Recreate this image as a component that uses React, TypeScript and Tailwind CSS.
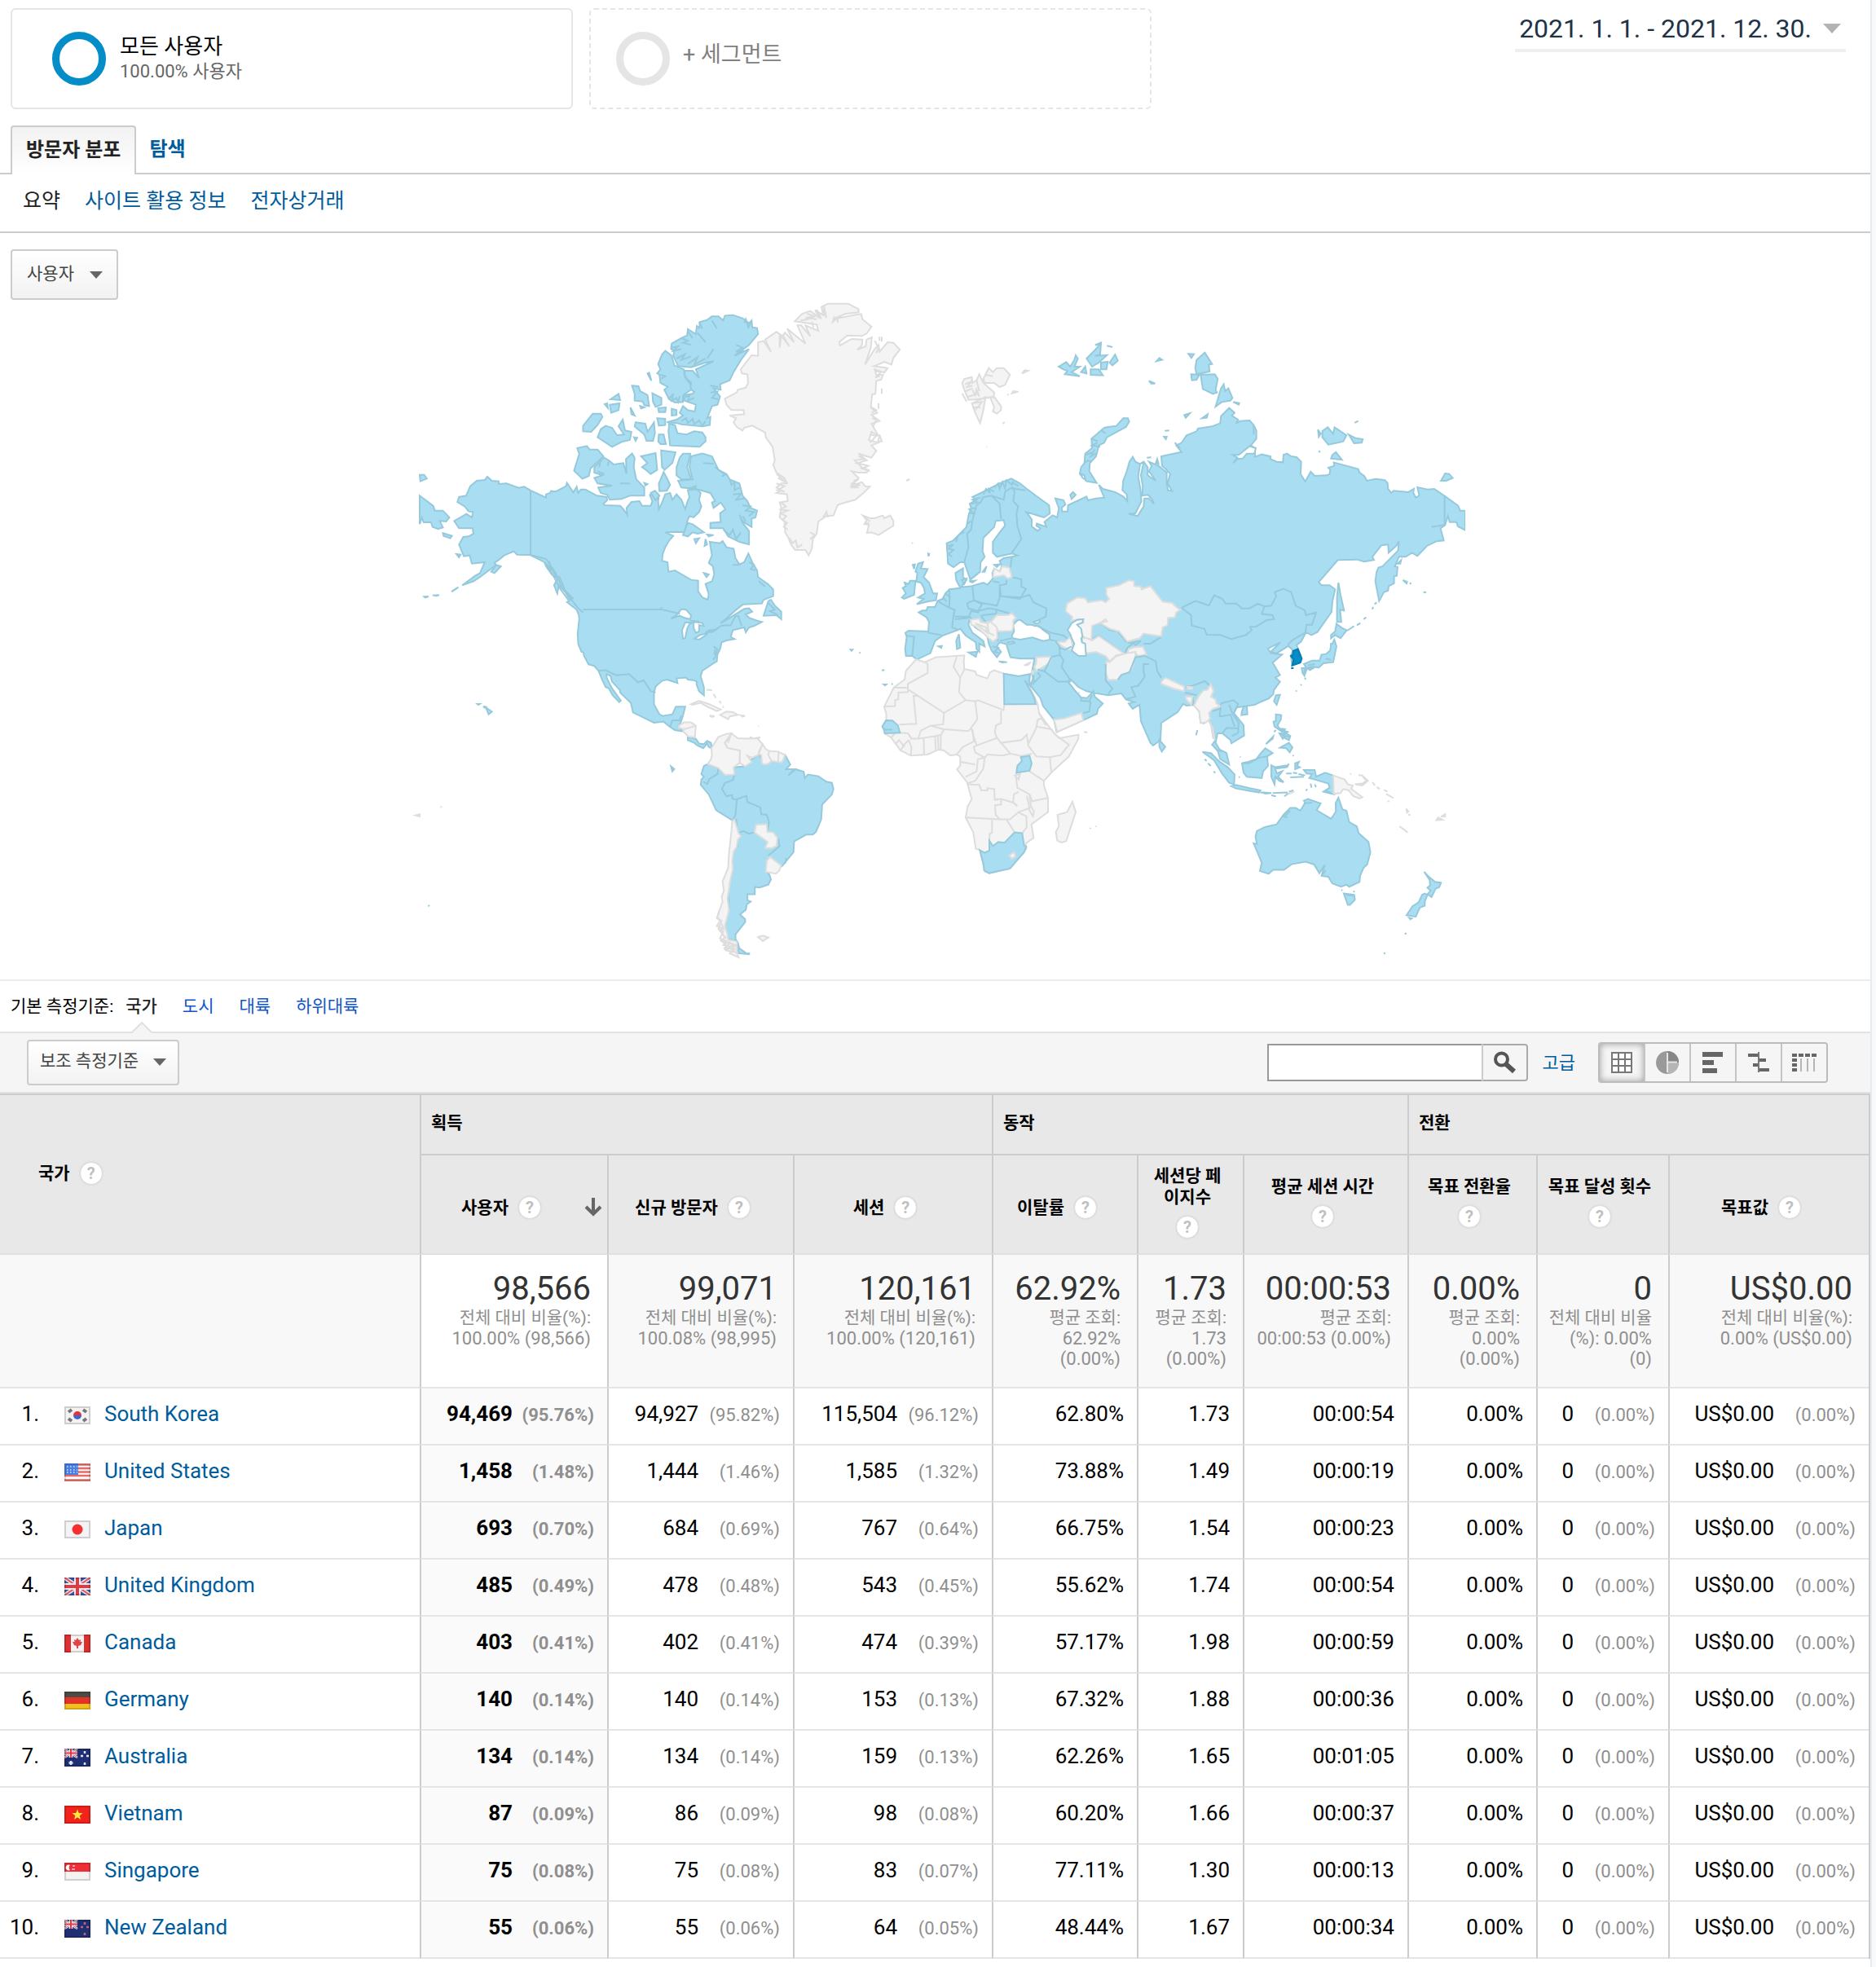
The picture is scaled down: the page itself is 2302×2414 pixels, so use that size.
import { useState } from "react";

// ── Report data ─────────────────────────────────────────────────────────────

interface Row {
  flag: string;
  name: string;
  users: [string, string];
  newUsers: [string, string];
  sessions: [string, string];
  bounce: string;
  pages: string;
  duration: string;
}

const ROWS: Row[] = [
  { flag: "kr", name: "South Korea",    users: ["94,469", "95.76%"], newUsers: ["94,927", "95.82%"], sessions: ["115,504", "96.12%"], bounce: "62.80%", pages: "1.73", duration: "00:00:54" },
  { flag: "us", name: "United States",  users: ["1,458", "1.48%"],   newUsers: ["1,444", "1.46%"],   sessions: ["1,585", "1.32%"],    bounce: "73.88%", pages: "1.49", duration: "00:00:19" },
  { flag: "jp", name: "Japan",          users: ["693", "0.70%"],     newUsers: ["684", "0.69%"],     sessions: ["767", "0.64%"],      bounce: "66.75%", pages: "1.54", duration: "00:00:23" },
  { flag: "gb", name: "United Kingdom", users: ["485", "0.49%"],     newUsers: ["478", "0.48%"],     sessions: ["543", "0.45%"],      bounce: "55.62%", pages: "1.74", duration: "00:00:54" },
  { flag: "ca", name: "Canada",         users: ["403", "0.41%"],     newUsers: ["402", "0.41%"],     sessions: ["474", "0.39%"],      bounce: "57.17%", pages: "1.98", duration: "00:00:59" },
  { flag: "de", name: "Germany",        users: ["140", "0.14%"],     newUsers: ["140", "0.14%"],     sessions: ["153", "0.13%"],      bounce: "67.32%", pages: "1.88", duration: "00:00:36" },
  { flag: "au", name: "Australia",      users: ["134", "0.14%"],     newUsers: ["134", "0.14%"],     sessions: ["159", "0.13%"],      bounce: "62.26%", pages: "1.65", duration: "00:01:05" },
  { flag: "vn", name: "Vietnam",        users: ["87", "0.09%"],      newUsers: ["86", "0.09%"],      sessions: ["98", "0.08%"],       bounce: "60.20%", pages: "1.66", duration: "00:00:37" },
  { flag: "sg", name: "Singapore",      users: ["75", "0.08%"],      newUsers: ["75", "0.08%"],      sessions: ["83", "0.07%"],       bounce: "77.11%", pages: "1.30", duration: "00:00:13" },
  { flag: "nz", name: "New Zealand",    users: ["55", "0.06%"],      newUsers: ["55", "0.06%"],      sessions: ["64", "0.05%"],       bounce: "48.44%", pages: "1.67", duration: "00:00:34" },
];

const SUMMARY: { value: string; label: string; lines: string[] }[] = [
  { value: "98,566",   label: "전체 대비 비율(%):", lines: ["100.00% (98,566)"] },
  { value: "99,071",   label: "전체 대비 비율(%):", lines: ["100.08% (98,995)"] },
  { value: "120,161",  label: "전체 대비 비율(%):", lines: ["100.00% (120,161)"] },
  { value: "62.92%",   label: "평균 조회:",         lines: ["62.92%", "(0.00%)"] },
  { value: "1.73",     label: "평균 조회:",         lines: ["1.73", "(0.00%)"] },
  { value: "00:00:53", label: "평균 조회:",         lines: ["00:00:53 (0.00%)"] },
  { value: "0.00%",    label: "평균 조회:",         lines: ["0.00%", "(0.00%)"] },
  { value: "0",        label: "전체 대비 비율",     lines: ["(%): 0.00%", "(0)"] },
  { value: "US$0.00",  label: "전체 대비 비율(%):", lines: ["0.00% (US$0.00)"] },
];

const METRICS: { lines: string[]; stacked?: boolean; sorted?: boolean }[] = [
  { lines: ["사용자"], sorted: true },
  { lines: ["신규 방문자"] },
  { lines: ["세션"] },
  { lines: ["이탈률"] },
  { lines: ["세션당 페", "이지수"], stacked: true },
  { lines: ["평균 세션 시간"], stacked: true },
  { lines: ["목표 전환율"], stacked: true },
  { lines: ["목표 달성 횟수"], stacked: true },
  { lines: ["목표값"] },
];

// ── World map ───────────────────────────────────────────────────────────────

// Joins runs of points from neighbouring map sheets into one closed outline
function ring(...parts: [number, number, string][]) {
  const pts = parts.flatMap(([dx, dy, s]) =>
    s.trim().split(/\s+/).map((p) => {
      const [x, y] = p.split(",").map(Number);
      return `${x + dx},${y + dy}`;
    })
  );
  return `M${pts.join(" ")}Z`;
}

const AMERICA_LAND = [
  // Alaska, Canada, United States, Mexico
  "M248,675 262,690 283,692 283,702 307,700 345,716 362,712 382,726 430,752 430,740 443,735 445,728 460,730 492,710 495,698 515,733 525,712 530,735 538,722 552,722 588,745 618,750 620,762 608,775 612,780 660,782 670,795 682,815 680,790 695,768 720,765 728,782 755,782 760,765 752,742 768,730 780,745 778,765 780,795 790,770 800,740 815,735 822,760 835,740 850,760 862,795 868,770 875,750 870,725 895,720 910,735 905,760 912,785 905,805 888,825 875,820 868,840 860,880 830,878 800,880 825,893 812,910 800,935 792,960 790,985 807,990 810,1025 830,1020 880,1055 902,1058 902,1097 915,1120 932,1128 935,1108 925,1070 945,1060 952,1035 948,1005 935,993 945,965 938,915 970,920 978,912 990,935 1012,940 1018,975 1030,998 1045,990 1058,958 1070,990 1085,1020 1088,1045 1120,1072 1135,1090 1135,1115 1105,1128 1100,1142 1042,1145 1025,1160 972,1215 1045,1162 1060,1160 1070,1172 1050,1182 1060,1195 1085,1205 1100,1210 1075,1225 1060,1230 1050,1248 1045,1230 1010,1240 1003,1265 1015,1273 990,1278 975,1285 970,1310 962,1330 960,1355 950,1362 915,1390 910,1410 920,1450 920,1480 905,1465 897,1440 898,1430 890,1425 870,1422 865,1415 835,1418 838,1435 805,1422 790,1427 770,1448 765,1470 765,1513 782,1550 792,1556 822,1550 833,1522 862,1522 855,1555 848,1580 840,1595 855,1613 830,1608 815,1597 795,1577 765,1581 700,1543 693,1508 660,1470 660,1462 635,1430 630,1408 618,1402 618,1415 635,1455 662,1500 657,1505 637,1480 625,1455 615,1450 605,1425 593,1390 580,1372 562,1366 548,1335 546,1322 540,1320 530,1292 528,1255 533,1200 532,1185 525,1165 495,1137 505,1130 490,1100 470,1075 465,1105 455,1075 465,1050 448,1035 430,1005 425,990 380,963 340,962 330,950 300,965 285,980 270,992 275,1000 225,1045 205,1060 170,1075 210,1040 225,1030 240,990 200,995 193,965 175,968 160,925 173,897 190,895 205,885 202,865 160,865 145,838 165,825 183,812 200,825 203,805 190,803 178,785 155,768 160,750 182,745 195,710 215,690 240,687Z",
  // Costa Rica, Panama
  "M870,1635 895,1640 905,1658 920,1660 930,1648 942,1655 945,1675 935,1670 930,1658 918,1675 900,1665 890,1655 870,1645Z",
  // Ellesmere and Devon
  "M945,85 965,85 980,100 985,82 1010,80 1040,92 1060,110 1068,100 1070,125 1085,128 1088,150 1060,190 1015,230 1060,205 1035,245 1012,290 1000,320 970,335 972,355 950,350 970,380 962,410 945,415 930,460 940,455 938,485 915,490 850,482 838,478 805,475 835,465 855,450 845,440 855,415 870,430 892,435 895,410 860,395 855,375 885,370 890,362 875,350 880,330 862,310 860,285 885,285 905,312 895,280 950,250 925,255 880,272 840,268 825,230 828,212 818,205 820,185 850,165 868,155 870,132 895,150 898,120 905,128 908,105 930,98Z",
  "M800,212 820,230 828,265 858,280 860,305 878,335 880,355 855,375 855,400 830,402 812,390 797,355 808,345 785,330 782,300 775,295 785,280 778,260 790,225Z",
  "M745,295 750,292 757,322Z M697,340 717,342 722,360 745,375 750,415 735,412 730,398 705,395 705,370Z M760,368 788,385 788,410 770,418 762,400Z M630,390 655,370 660,393Z M628,410 658,405 655,430 632,440Z M612,408 620,405 622,422Z",
  "M575,443 600,443 605,455 590,485 570,510 545,508 545,488Z M590,530 600,500 615,488 635,495 650,522 672,520 655,490 668,465 675,505 695,510 690,540 665,547 635,565Z M708,475 738,480 745,510 765,475 768,515 762,543 742,543 735,520 705,490Z M775,460 800,462 800,485 780,487Z M778,422 802,420 800,437 780,437Z M820,425 835,430 835,448 820,450Z M780,520 795,520 802,555 785,555 778,545Z M812,480 830,485 838,515 865,520 890,508 915,512 925,530 925,545 907,565 848,562 815,560 810,510Z M692,420 705,450 695,445Z M722,415 735,420 725,424Z M703,530 713,532 708,543Z",
  // Banks, Victoria, Prince of Wales, Somerset
  "M527,570 557,562 565,575 590,575 608,600 568,645 563,672 543,683 517,653 533,592Z",
  "M610,605 625,615 640,630 670,625 680,665 678,610 697,590 705,605 702,640 710,685 735,715 735,745 690,745 665,757 628,760 620,742 600,735 592,715 635,708 590,700 580,680 605,670 580,660 580,640Z",
  "M725,600 770,588 775,650 755,665 740,650 728,640 745,625Z M787,578 832,585 822,625 798,650 790,640Z M795,658 805,680 815,705 805,727 782,728 780,700Z M755,735 768,727 782,745 770,762Z M735,698 745,702 738,708Z",
  // Baffin, Southampton
  "M855,590 878,590 868,640 880,685 850,685 835,670 835,640 845,605Z",
  "M880,600 915,590 945,600 955,625 965,650 990,665 1000,685 1030,700 1040,745 1055,765 1065,790 1085,800 1080,825 1068,830 1068,860 1040,840 1030,815 1040,845 1060,875 1060,925 1030,915 995,895 980,865 940,865 940,845 972,842 970,810 987,795 972,770 950,790 945,770 955,765 940,735 895,720 850,715 840,690 885,685 875,640Z",
  "M870,845 885,850 920,880 900,885 885,880 870,895 855,890Z M890,905 905,902 895,920Z M925,905 930,925 922,930Z M920,1030 935,1035 928,1045Z M930,888 950,890 935,895Z",
  // Newfoundland, Kodiak, Aleutians, Chukotka edge, Hawaii, Galapagos
  "M1120,1133 1128,1128 1140,1150 1160,1172 1160,1200 1145,1185 1105,1187Z M260,1025 275,1000 290,1005 270,1030Z M137,1098 158,1082 140,1097Z M52,1117 65,1116 55,1120Z M78,1112 98,1111 90,1114Z M110,883 138,893 133,902 112,893Z M38,745 80,783 85,800 110,800 130,825 120,840 100,838 110,862 95,868 78,860 73,843 50,843 45,825 38,850Z M38,668 52,668 60,682 40,692Z M152,960 165,962 160,972Z M243,1525 262,1540 252,1550Z M217,1512 224,1512 220,1515Z M235,1522 243,1523 240,1526Z M818,1742 828,1752 822,1760Z",
  // South America
  "M932,1733 965,1748 985,1773 1015,1772 1012,1745 1048,1742 1068,1715 1092,1698 1108,1735 1172,1700 1188,1735 1175,1752 1200,1752 1182,1775 1205,1752 1230,1762 1233,1785 1243,1772 1275,1778 1300,1798 1317,1802 1322,1825 1317,1845 1287,1882 1284,1937 1268,1982 1258,1993 1237,1993 1200,2018 1198,2058 1162,2110 1115,2130 1123,2140 1128,2158 1120,2177 1093,2188 1078,2186 1078,2213 1055,2213 1055,2235 1065,2240 1053,2250 1050,2270 1032,2287 1048,2305 1048,2315 1018,2360 1018,2378 1025,2390 1030,2412 1055,2433 1028,2430 1022,2385 995,2378 982,2340 998,2265 995,2200 1002,2160 1010,2120 1008,2090 1012,2055 1025,2035 1022,2010 1035,1995 1025,1990 1020,1938 1010,1942 958,1903 935,1845 910,1810 912,1790 920,1780 912,1770 920,1740Z",
  "M1375,1312 1381,1312 1378,1316Z M1402,1323 1406,1324Z M1472,1388 1480,1388Z M1478,1440 1486,1440 1482,1444Z M1502,1438 1506,1440Z M64,2254 69,2256Z M1055,2430 1063,2431Z",
];

const AMERICA_WATER = [
  "M818,1198 835,1185 850,1163 865,1165 880,1185 878,1200 860,1195 845,1187Z",
  "M852,1240 862,1212 885,1212 875,1218 868,1235 862,1270 855,1272Z",
  "M888,1210 915,1214 920,1225 905,1222 905,1245 895,1250 888,1232Z",
  "M890,1272 908,1258 930,1252 925,1260 905,1275Z M925,1247 938,1240 955,1240 945,1247Z",
];

const AMERICA_BORDERS = [
  "M382,726V963 M380,963 430,978 460,1030 480,1085 510,1130 530,1160 545,1175 M425,990 450,1020 470,1060 M440,985 445,1020 M430,1000 455,1045 475,1090 500,1130 M470,1040 490,1095 515,1125",
  "M545,1164H790L845,1180 M788,1155V1164 M878,1205 905,1208 M925,1250 960,1235 975,1223 1003,1222 1018,1188 1027,1188 1037,1225",
  "M593,1390 615,1388 648,1406 688,1402 715,1432 733,1425 755,1465 770,1470 M815,1597 822,1572 845,1572 850,1555",
  "M950,1300 962,1310 955,1340 948,1350 M955,1310 952,1330",
  "M965,1748 962,1770 937,1788 930,1807 918,1798 M1015,1772 1010,1792 985,1803 976,1825 990,1852 1007,1847 1008,1860 1022,1865 1018,1920 1010,1940",
  "M1022,1863 1052,1850 1055,1873 1095,1893 1098,1918 1115,1920 1122,1945 1118,1980 M1030,1985 1042,1980 1060,1990 1075,1985 M1150,2005 1155,2035 1120,2070",
  "M1172,2100 1175,2082 1180,2085 M925,180 900,145 M960,130 945,100 M930,240 950,205 M660,700 690,700 M918,625 950,628",
  // Fjord coasts
  "M820,200 840,195 825,212 850,205 M850,165 870,175 855,182 880,190 M870,140 885,165 M905,105 915,130 M835,240 860,225 850,245 880,232 M870,260 900,235 890,262 925,240 M1068,100 1058,125 1050,95 1045,110 M1020,190 1040,200 1020,215 1045,212 M785,300 800,305 788,315 M810,390 825,370 820,395 835,385 840,400 845,378 M855,385 875,375 870,395 890,385 M940,340 965,345 M940,365 962,362 945,385 965,390 M850,470 865,460 870,478 885,462 890,482 905,468 915,488 925,470 M862,310 880,330",
  "M955,640 985,668 975,675 M1000,685 1005,705 1015,695 1015,725 1030,715 M1010,740 1035,738 1020,760 1045,755 M1040,780 1065,785 1050,800 1075,805 1060,820 M980,870 1000,890 1010,870 1020,905 1035,880 M1040,820 1050,840 M870,720 895,710 890,725 M1060,990 1075,1000 1065,1015 1080,1020 M1090,1060 1110,1080 M1120,1140 1140,1165 1125,1170 1150,1185 M600,610 595,640 M625,615 622,635 M590,655 610,665 M1010,1000 1030,1000",
];

const AMERICA_GREY = [
  // Greenland
  "M1305,38 1368,38 1400,58 1400,70 1360,75 1320,95 1385,80 1408,76 1412,95 1440,123 1425,148 1410,157 1365,155 1340,180 1342,192 1378,168 1412,170 1410,192 1396,208 1422,195 1425,170 1441,162 1438,200 1420,262 1450,205 1462,190 1465,215 1490,180 1508,182 1528,207 1508,238 1502,262 1480,252 1448,268 1490,275 1480,292 1450,280 1455,300 1476,300 1470,318 1455,322 1452,370 1442,372 1438,420 1458,440 1440,448 1465,470 1440,480 1462,525 1440,510 1432,540 1460,550 1440,560 1455,580 1440,605 1425,600 1400,590 1420,610 1388,615 1410,640 1430,650 1425,660 1400,660 1378,655 1400,680 1375,710 1410,695 1420,710 1435,712 1415,735 1390,760 1345,775 1335,780 1322,818 1300,820 1275,840 1270,885 1258,905 1255,940 1245,965 1235,945 1203,945 1190,925 1182,900 1172,880 1170,840 1155,825 1160,790 1155,770 1180,765 1178,740 1145,735 1160,725 1145,715 1160,700 1178,700 1170,680 1145,660 1135,632 1140,615 1133,565 1112,530 1110,513 1070,487 1045,495 1040,505 1022,492 1012,475 1020,460 1000,450 1045,445 1043,430 1005,430 990,410 985,388 1022,365 1025,355 1050,347 1057,330 1055,298 1038,295 1034,280 1068,228 1088,230 1088,180 1105,175 1128,215 1110,170 1145,142 1155,150 1155,200 1160,155 1185,195 1165,155 1172,145 1200,180 1178,130 1235,185 1210,118 1222,118 1250,158 1235,118 1275,138 1270,115 1215,105 1202,103 1225,75 1250,65 1280,92 1265,62 1290,80 1285,50Z",
  "M1413,818 1425,835 1418,850 1432,852 1426,882 1440,880 1462,890 1508,855 1508,838 1498,818 1480,828 1475,818 1450,828 1435,828Z",
  // Caribbean
  "M880,1513 905,1500 935,1512 972,1532 960,1538 930,1522 910,1508 885,1515Z M970,1552 990,1540 1010,1542 1025,1552 1000,1558 995,1568Z M938,1555 953,1557 945,1560Z M1035,1554 1047,1556 1040,1559Z M928,1460 945,1461Z M950,1475 957,1490Z M968,1500 973,1510Z M1062,1634 1070,1636Z M1078,1638 1092,1635 1090,1642Z M1088,1593 1090,1595Z M978,1522 982,1524Z",
  // Honduras, Nicaragua
  "M842,1592 858,1580 880,1580 895,1592 892,1635 872,1632 855,1612 858,1605 842,1600Z M858,1605 895,1592Z",
  // Colombia, Venezuela, Guyanas
  "M943,1675 965,1633 990,1622 1005,1620 985,1655 993,1673 1032,1683 1030,1730 1012,1745 1015,1772 985,1773 965,1748 932,1733 942,1715 945,1700Z",
  "M1005,1620 1025,1638 1050,1640 1085,1638 1102,1660 1090,1690 1092,1698 1070,1710 1055,1703 1068,1725 1048,1742 1032,1730 1032,1683 993,1673 985,1655 998,1640 995,1655Z",
  "M1102,1660 1112,1678 1122,1685 1120,1700 1130,1722 1120,1732 1108,1735 1100,1730 1098,1700 1090,1695Z M1122,1685 1152,1688 1150,1725 1130,1722 1120,1700Z M1152,1688 1172,1700 1162,1727 1150,1725Z",
  // Paraguay, Uruguay, Chile, Falklands
  "M1082,1956 1115,1955 1117,1983 1135,1985 1148,2005 1145,2035 1130,2043 1110,2042 1118,2020 1077,1985Z",
  "M1125,2075 1160,2107 1153,2127 1143,2137 1112,2130 1115,2090Z",
  "M1015,1938 1028,1990 1035,1997 1025,2012 1022,2038 1012,2055 1008,2090 1010,2120 1002,2160 997,2200 993,2230 998,2270 985,2330 992,2358 995,2380 1022,2387 1023,2432 1028,2445 1000,2430 1015,2415 985,2410 1000,2395 975,2385 985,2370 968,2345 978,2338 960,2330 970,2310 960,2300 978,2240 975,2222 982,2200 978,2165 995,2115 998,2060 1005,1985 1008,1943Z",
  "M1088,2370 1103,2365 1120,2372 1103,2385Z M25,1922 38,1918 38,1926Z M102,1890 107,1892Z M1548,690 1558,684Z",
];

const AMERICA_GREY_DETAIL = [
  "M1285,50 1300,90 1292,45 M1270,60 1285,95 M1240,75 1265,85 1235,90 1270,95 M1220,100 1245,95 M1255,105 1260,125 M1325,85 1320,105 1335,90 1335,108",
  "M1450,175 1462,200 1455,220 M1465,160V175 M1472,160V178 M1450,285 1470,290 1452,310 1465,305 M1472,350V370 M1462,405V425 M1440,420 1455,430 1440,440 M1442,460 1455,465 1445,490 M1435,520 1455,525 1435,550 M1466,525 1472,545 1460,545Z",
  "M1400,600 1425,615 1395,625 1430,635 1410,645 1435,655 M1385,690 1400,685 1380,700 1405,705 1375,715 1400,715 M1145,665 1170,690 1150,680 1180,700 M1145,700 1170,710 1148,725 1170,730 M1160,770 1175,785 1158,795 1180,800 1158,810 1175,820 1165,835 1178,845 1168,860 1180,870 M1185,900 1195,920 1205,910 1210,935 1225,925 M1250,880 1265,890 1250,905 M1290,825 1300,805 1305,825",
  "M968,2270 962,2300 975,2310 965,2340 980,2350 970,2375 990,2385 980,2400 1000,2405 990,2420 1015,2425 1005,2395 1020,2405 M995,2385 1010,2400 995,2412 M975,2320 982,2345 M970,2380 990,2400 985,2415 1005,2425 M975,2360 990,2375 M1000,2390 1020,2400 1005,2415 1022,2430 M1420,825 1435,840 M1418,848 1432,845",
];

// Eurasia as one outline, read clockwise from the North Cape
const EURASIA = ring(
  [0, 0, "543,562 575,580 600,600 633,625 682,660 685,690 663,705 598,685 618,712 618,738 640,755 650,745 635,735 637,728 672,740 665,722 695,697 712,705 718,672 705,635 735,642 742,658 728,670 730,683 750,683 752,660 820,628 825,642 855,635 885,632 865,585 880,600 925,612 955,628 970,645 968,620 952,605 955,570 968,535 978,500 990,482 1000,500 1017,508 1030,500 1045,520 1045,550 1075,570 1050,535 1060,515 1050,500 1085,515 1115,540 1115,580 1120,605 1135,608 1118,580 1128,545 1110,525 1098,515 1095,480 1165,465"],
  [1020, 0, "150,465 130,440 150,430 168,403 205,388 210,378 262,370 292,358 295,332 325,302 345,320 335,330 358,345 350,360 365,350 400,348 415,365 425,385 425,415 405,440 420,450 420,482 445,473 477,480 477,490 500,500 523,502 525,475 538,470 553,480 573,483 590,500 588,545 605,573 625,537 640,552 685,550 695,545 697,530 690,522 712,515 710,503 800,527 805,540 822,552 832,570 865,563 898,568 908,578 910,600 922,615 930,607 985,612 1005,600 1003,615 1012,632 1025,625 1018,594 1055,602 1080,600 1118,626 1168,662 1175,680 1194,680 1194,752 1167,738 1162,722 1137,722 1130,700 1120,733 1103,745 1115,790 1088,793 1053,810 1018,847 998,835 975,850 950,850 935,885 945,888 942,920 932,922 932,948 912,958 910,975 895,980 877,1013 870,975 863,940 868,905 875,890 890,885 947,827 950,793 940,810 912,835 910,805 885,808 852,850 858,862 822,868 795,860 725,862 655,943 665,955 695,955 715,970 705,1015 702,1053 650,1127 628,1138 608,1128 590,1162 573,1175 580,1192 592,1225 585,1240 557,1250 552,1215 560,1195 545,1180 540,1180 500,1205 478,1200 513,1165 468,1188 478,1205 520,1210 485,1240"],
  [1020, 1020, "512,265 495,275 512,290 490,320 487,337 470,352 435,367 418,375 385,380 352,385 342,405 378,450 380,488 333,517 330,505 300,480 282,480 275,515 290,540 315,552 325,595 292,575 283,545 262,522 275,505 265,460 248,430 232,443 220,440 215,400 195,375 168,378 155,372 135,402 75,442 72,505 45,525 35,515"],
  [0, 1020, "1020,435 1015,375 990,390 975,370 995,365 965,355 948,333 900,340 850,332 820,325 790,310 760,280 750,290 760,300 775,320 800,348 822,350 845,325 850,345 880,370 862,390 858,408 808,432 710,475 700,430 660,380 650,350 614,305 625,270 618,262 628,205 575,205 540,200 530,170"],
  [0, 0, "525,1172 500,1165 490,1180 505,1200 490,1220 470,1195 460,1170 455,1145 440,1130 410,1110 388,1085 385,1100 400,1130 440,1160 445,1180 425,1170 425,1200 415,1190 412,1165 375,1140 355,1115 345,1120 310,1133 290,1140 262,1160 245,1205 195,1228 178,1215 155,1215 152,1190 158,1145 153,1130 165,1122 237,1125 240,1090 230,1072 202,1055 215,1048 230,1048 235,1035 262,1035 272,1012 290,1005 300,985 315,970 355,965 340,935 337,910 365,893 365,925 378,935 358,962 398,958 440,945 455,953 475,930 473,910 480,893 500,905 508,885 500,865 515,855 545,850 565,845 545,838 490,850 475,835 475,795 500,760 520,735 515,715 485,718 480,740 440,780 437,830 445,850 430,870 428,905 392,935 370,870 355,870 330,888 310,875 305,800 330,790 378,740 385,700 395,670 390,655 415,640 400,630 440,610 480,590 510,575"]
);

const NORTHWEST = {
  land: [
    "M955,340 972,340 977,352 965,372 895,410 885,430 865,440 855,480 832,505 830,535 857,578 820,572 795,545 800,520 812,505 815,470 840,450 838,415 885,375 900,372 930,368Z M760,622 770,612 780,622 765,637Z",
    // Franz Josef Land
    "M717,150 745,133 760,150 775,125 780,108 788,120 775,150 795,150 765,170 795,185 740,178 750,165 735,160Z M820,120 850,90 873,65 870,105 850,110 895,108 865,135 840,150Z M873,135 898,132 893,160 873,160Z M905,135 925,105 935,128 915,145Z M800,170 815,150 820,175Z M835,160 865,160 880,182 835,180Z M895,73 915,78Z M852,70 872,62 870,72Z",
    // British Isles
    "M200,875 218,870 210,893 235,895 220,925 240,945 255,985 270,985 265,1010 235,1015 195,1025 220,1005 200,1000 225,985 222,965 210,945 193,942 197,910 190,905Z M150,945 165,950 170,938 190,938 185,990 148,1005 140,1000 155,985 143,965 155,958Z M180,880 188,878 185,895Z M237,838 241,840 238,848Z",
    "M360,935 378,930 370,950Z M340,1160 350,1135 355,1185 343,1190Z M385,1202 418,1200 412,1218Z M497,1235 527,1238 510,1239Z M275,1180 287,1178 285,1185Z M438,905 452,885 445,905Z M480,880 500,878 490,888Z M388,940 410,938 400,945Z",
  ],
  water: [
    "M545,1140 553,1125 550,1100 565,1085 575,1082 600,1100 615,1100 630,1105 645,1105 660,1120 683,1135 685,1155 660,1160 620,1147 575,1155 548,1150Z M625,1090 645,1083 650,1090 635,1097Z M530,1165 550,1162 555,1167 535,1172Z",
    "M1017,508 1030,503 1020,550 1027,590 1025,625 1045,622 1060,635 1068,655 1050,635 1033,635 1030,665 1008,700 975,692 1000,690 1022,645 1018,600 1010,555Z",
    "M1360,505 1375,485 1358,475 1380,475 1420,443 1443,450 1438,470 1410,470 1395,488 1375,490Z",
    "M800,545 812,550 815,565 805,560Z",
  ],
  borders: [
    "M370,870 385,815 380,765 395,750 400,715 415,660 430,650 440,630 470,625 500,655 505,710 M470,625 515,640 520,610 545,595 560,600 595,605 M545,595 555,610 550,645 568,665 562,690 565,735 580,785 545,835 M545,850 540,890",
    "M545,925 580,933 580,960 597,968 575,1005 505,995 500,955 525,950 525,935 M475,940 500,945 M400,960 405,1010 435,1020 490,1030 500,1000 500,960",
    "M380,1022 405,1010 435,1025 420,1050 385,1040Z M420,1050 460,1040 490,1045 485,1060 435,1065 M505,995 580,1000 610,990 625,1018 672,1040 670,1070 640,1085 M490,1045 540,1060",
    "M275,1015 315,1038 335,1045 328,1080 325,1110 345,1118 M315,970 315,1038 M335,1070 390,1070 400,1085 M237,1130 285,1138 M158,1140 185,1145 178,1215 M335,1080 385,1075 395,1050 425,1055 M430,1065 450,1093",
    "M493,1125 545,1123 M500,1160 545,1150 M493,1125 493,1160 M640,1105 690,1130 735,1140 755,1155 M685,1155 720,1163",
    "M838,1155 840,1105 870,1093 905,1120 935,1125 965,1162 990,1170 970,1185 960,1208 865,1140Z M1095,1145 1055,1170 1030,1170 M990,1165 1020,1160 1000,1175Z",
    // Norwegian fjords, Novaya Zemlya
    "M310,810 330,805 312,820 330,825 312,840 325,850 M330,790 345,775 340,795 M355,765 370,760 M378,730 395,720 M385,690 405,690 388,675 410,670 M395,655 420,650 400,640 430,632 M440,620 450,600 465,615 460,600 480,610 M480,595 495,580 500,600 510,575 520,598 525,568 545,585 550,572 M570,590 545,575",
    "M850,455 835,480 855,470 M860,430 840,440 870,445 M840,415 860,425 M875,385 890,395 M812,505 825,495 840,500 M815,475 845,465 M290,1000 305,1015 M300,985 320,1000 M473,1180 495,1185 480,1200 500,1205",
  ],
  grey: [
    // Kazakhstan, Turkmenistan, Tajikistan
    "M743,1050 748,1023 785,1000 815,1003 825,1018 875,1010 890,1018 903,1005 893,990 893,965 940,955 975,937 995,940 995,958 1020,960 1022,970 1055,958 1100,1015 1135,1020 1150,1035 1165,1045 1150,1055 1145,1073 1120,1075 1118,1103 1100,1110 1095,1143 1030,1133 1015,1150 970,1162 940,1125 905,1115 870,1093 840,1105 838,1155 815,1150 805,1140 800,1120 785,1100 808,1092 808,1080 788,1080 765,1085 768,1072Z M870,1093 890,1080 895,1088Z",
    "M805,1150 815,1148 840,1158 865,1142 960,1208 930,1213 905,1235 890,1215 855,1200 820,1205 803,1175Z M970,1208 975,1190 1000,1182 1028,1182 1040,1210 1010,1215 1000,1205Z",
    "M708,1163 740,1163 760,1145 770,1180 765,1195 735,1183Z",
    // Romania, Balkans, Latvia
    "M450,1093 470,1087 490,1065 530,1065 545,1057 560,1075 550,1085 550,1110 545,1123 495,1125 485,1105Z",
    "M393,1082 425,1078 430,1090 455,1095 465,1088 490,1110 492,1150 475,1162 460,1150 440,1130 410,1105 395,1100Z M410,1095 450,1110 455,1130Z M455,1095 460,1130Z M460,1130 480,1140Z",
    "M475,925 480,893 500,905 510,885 535,890 545,925 530,930 515,918Z",
    // Svalbard
    "M362,210 370,195 397,188 400,210 415,200 425,178 440,210 480,245 478,262 415,270 385,272 370,235Z M440,195 460,155 475,170 490,155 515,155 538,180 520,217 500,225 480,210 445,210Z M398,285 448,262 440,310 428,358 410,320Z M465,262 480,262 505,295 505,310 490,323 475,315 480,300Z M582,175 592,163 605,165Z M545,248 550,240 568,242Z M375,240 400,230Z M380,262 420,250Z M415,200 425,240Z M400,300 430,300Z M362,248 378,278Z M372,215 395,205 380,225 400,220 M400,235 410,255 415,235 425,260 M450,180 475,185 M400,285 435,280 410,310",
    "M590,1250 615,1238 605,1248Z M160,570 168,564Z M512,360 518,353Z M452,445 454,446Z M177,798 180,802Z M530,250 531,256Z",
  ],
};

const CASPIAN = "M750,1120 765,1095 785,1082 808,1080 805,1092 785,1100 800,1115 805,1145 800,1150 803,1165 815,1170 818,1215 790,1215 765,1195 775,1170 765,1150 760,1135Z";

const SOUTHWEST = {
  grey: [
    // Africa
    "M192,208 225,218 265,200 370,193 368,215 370,243 410,252 415,265 455,278 465,255 480,248 515,260 570,270 612,262 610,305 630,350 640,372 645,405 670,440 705,485 720,498 790,485 790,500 755,565 690,625 663,655 663,672 678,718 678,770 617,815 625,865 597,885 598,905 540,978 462,995 445,988 440,965 427,910 412,905 403,845 375,790 382,750 397,722 380,660 343,613 355,598 355,565 342,558 318,562 295,543 275,540 235,558 173,562 135,543 100,495 78,482 68,455 82,432 83,410 75,382 110,312 150,282 155,250Z",
    "M768,732 780,770 745,877 728,882 712,875 707,843 718,822 713,780 748,770Z M831,828 836,832Z M853,822 857,823Z M810,475 823,477Z",
    // Afghanistan, Syria, Yemen
    "M893,215 905,218 930,195 970,185 1000,180 1000,195 990,235 978,255 948,265 935,283 900,283 890,255Z M635,222 635,200 690,198 685,220 635,250 628,235Z M700,430 740,425 800,405 808,432 712,475Z M788,330 795,332Z M618,250 626,252 620,265Z",
  ],
  greyBorders: [
    "M75,382 115,380 115,358 127,355 127,330 162,328 162,298 235,258 235,225 225,218 M110,312 162,312 M162,318 295,405 292,447 245,452 210,470 200,500 175,500 163,480 135,478 M200,342 183,342 193,445 130,448",
    "M295,405 375,358 350,328 355,275 330,235 342,198 M355,275 370,245 M375,358 410,362 420,358 515,395 517,373 M505,397 505,443 487,450 482,475 490,497 415,525 395,460 418,428 410,362 M395,460 385,472 295,465 245,452 M517,373H640",
    "M645,405 655,425 640,430 635,460 605,520 600,485 580,505 505,515 490,497 M635,455 690,465 705,485 M655,425 670,450 M705,485 755,522 725,560 685,568 635,565 605,525 M685,568 690,625 M663,655 610,620 M505,515 540,555 580,563 618,555",
    "M540,555 510,562 455,558 445,570 410,550 405,530 415,525 M355,585 410,595 M445,570 420,575 415,620 375,640 M445,570 440,610 410,655 380,665 M380,668 425,670 432,690 455,690 455,682 480,685 482,725 505,722 550,735 565,748",
    "M562,625 560,640 565,680 610,705 620,730 678,718 M505,725 505,742 483,745 485,780 500,797 375,790 M500,797 538,797 570,770 610,755 600,710 M565,748 550,735 552,705 570,695 M525,797 555,845 583,848 600,825 598,785 570,772 M472,800 472,845 463,850 462,875",
    "M610,705 615,750 627,768 622,785 605,755 M220,495 222,558 M262,490 265,545 M272,488 275,540 M283,488 283,540 M342,558 365,530 405,510 400,465 M200,500 265,490 285,485 295,465 M173,562 175,530 165,505 M135,543 150,520 165,505 M115,520 130,505 150,530 M100,495 115,480 M556,635 575,630 570,650Z M590,893 580,885 583,905",
  ],
  land: [
    "M515,260 570,270 612,262 608,285 617,310 592,285 628,350 632,372 517,373Z",
    "M68,455 82,432 105,433 125,450 133,478 77,480 75,465Z M75,467H105Z",
    "M578,568 610,563 618,592 610,618 562,625 565,600 582,582Z",
    "M427,910 445,920 462,912 462,875 475,895 495,880 518,883 555,845 583,848 590,893 598,898 590,918 537,978 462,995 443,985 440,960Z",
    "M1088,505 1110,530 1097,547 1088,530Z",
  ],
  borders: [
    "M705,140 720,160 722,192 690,198 M722,192 735,210 728,235 755,275 760,290 750,290 715,290 665,252 640,245 M665,252 690,200 M640,255 650,270 620,300 M620,265 628,290 M800,348 800,360 830,362 840,340 M835,362 830,400 808,405",
    "M890,225 890,285 915,315 900,335 M935,283 948,265 978,255 1000,200 1035,195 1075,215 1080,250 1095,275 M1050,225 1030,225 1030,255 1035,270 1010,305 985,310 1000,345 965,355 M718,165 740,172 765,160",
  ],
};

const NORTHEAST = {
  land: [
    // Severnaya Zemlya
    "M235,98 262,140 250,142 253,168 205,178 200,155 205,125Z M220,180 272,178 283,195 275,235 280,245 265,250 228,232Z M185,178 215,180 205,198 188,200Z M305,215 310,240 322,230 337,265 330,275 298,280 275,297 295,230Z M175,103 195,104 186,118Z M57,130 68,118 78,125Z M30,202 52,212 38,212Z M225,340 246,325 243,338Z M340,280 362,284 360,290Z M160,328 180,322 165,338Z M85,408 95,408 92,417Z M88,386 104,385Z M22,485 38,484Z M60,490 65,508 55,505Z",
    // New Siberian Islands, Wrangel
    "M668,387 688,373 708,397 713,373 757,403 745,425 725,430 690,437 668,410Z M765,400 790,413 817,417 813,430 785,432Z M705,475 718,465 740,493 700,488Z M652,382 662,397 655,408Z M787,357 800,350Z M655,460 660,465Z M1105,570 1120,543 1135,545 1148,560 1125,570Z",
    // Sakhalin and Kurils
    "M727,945 735,990 748,1048 733,1045 738,1090 722,1090 722,1000Z M945,875 958,862 955,875Z M965,936 980,942 978,948Z M1040,980 1050,981Z M990,946 995,950Z M852,1043 855,1035Z M860,1024 868,1019Z M820,1080 829,1073Z",
  ],
  borders: [
    "M150,1038 200,1013 225,1020 250,1030 270,992 300,1005 312,1022 352,1022 372,1040 400,1040 430,1023 455,1033 480,1030 498,995 493,980 525,968 553,980 570,1030 603,1047 608,1065 645,1055 630,1100 610,1100 605,1130",
    "M150,1038 185,1065 187,1103 233,1115 243,1137 292,1138 333,1153 387,1138 408,1120 402,1108 425,1107 463,1083 490,1080 485,1065 445,1060 455,1033 M1118,626V733 M540,1175 560,1155 605,1130 M1118,733 1070,740 M125,430 145,450 M415,365V400",
  ],
};

const SOUTHEAST = {
  land: [
    // Japan, Taiwan, Hainan
    "M705,150 712,135 720,160 708,218 690,220 672,222 655,238 630,235 610,240 600,225 630,212 658,212 665,190 682,188 697,175 700,150Z M592,240 612,240 602,268 595,258Z M615,242 638,238 622,247Z M720,77 740,92 758,100 735,130 715,118 700,130 700,118 715,105Z M760,102 785,85Z M795,82 808,74Z M497,340 512,338 500,375 490,362Z M372,398 378,382 390,380 392,410 370,413Z M588,303 592,300Z M570,325 574,323Z M604,275 606,282Z",
    // Philippines
    "M497,410 517,413 515,430 503,450 510,462 530,465 520,475 492,455 488,437 497,435Z M512,533 545,515 558,532 548,550 535,535Z M510,480 530,482 522,500Z M530,475 550,490 545,505 530,498Z M460,520 487,492 485,500Z M490,475 497,468Z M560,560 562,564Z",
    // Indonesia, Malaysia
    "M227,548 258,553 290,585 320,605 345,632 343,668 325,662 300,630 270,580Z M333,675 350,670 400,682 440,690 435,698 350,683Z M440,697 480,700 460,702Z M485,700 540,698Z M480,708 497,712Z M528,712 545,700Z M372,590 395,585 425,575 440,555 458,535 485,553 465,565 468,600 450,620 445,645 390,640 378,625Z M480,598 495,605 540,598 545,592 538,605 495,610 500,628 520,620 505,640 525,660 510,655 495,640 492,668 480,640Z M568,590 582,585 575,600 585,605 568,612Z M535,628 555,628Z M550,642 600,640Z M560,625 575,627Z M580,630 605,635Z M235,575 242,582Z M247,590 257,600Z M268,620 274,626Z M625,665 628,680Z M608,692 612,685Z M545,695 562,690Z M365,566 367,568Z M203,487 208,468Z M640,668 645,678Z M360,640 364,642Z",
    "M600,615 640,615 645,640 678,625 708,635 712,705 672,695 695,680 690,665 640,650 620,645 630,630 610,628Z",
    // Australia and New Zealand
    "M727,717 742,760 757,765 767,807 795,823 802,848 838,880 845,918 833,963 820,975 807,1005 805,1027 767,1045 757,1037 737,1045 705,1033 690,1008 665,1005 677,965 657,995 638,963 607,953 555,962 527,983 487,983 470,997 438,987 445,957 430,920 415,885 427,888 422,860 427,840 457,825 500,815 525,780 550,755 570,755 587,765 605,735 600,728 615,722 662,738 647,763 700,795 718,768 717,738Z M747,1070 785,1075 788,1093 770,1112 762,1112Z M738,1057 742,1059Z M783,1060 786,1065Z",
    "M1043,990 1062,1010 1083,1027 1105,1030 1098,1047 1085,1052 1070,1083 1055,1072 1067,1060 1055,1048 1065,1040 1063,1020Z M1045,1070 1055,1075 1045,1100 1045,1115 1027,1122 1012,1155 978,1150 1000,1117 1023,1102 1035,1075Z M988,1160 997,1162 992,1165Z M972,1220 977,1215Z M896,1287 898,1293Z",
  ],
  borders: [
    "M295,370 340,358 358,372 345,402 M295,370 290,418 330,412 345,455 M325,375 338,410 360,440 358,478 335,490 M255,400 290,390 M300,480 315,460 358,462 M278,540 300,548 M375,592 400,590 435,570 465,565 M160,310 190,305 235,288 255,305 M195,378 190,345 M162,330 205,340 M530,785 550,765 M600,738 630,735 M607,230 600,260 M668,1000 680,985 M755,1075 780,1078",
    "M510,465 540,475 520,485 550,495 M525,470 530,500 M615,230 640,225 M680,205 700,210 M520,785 540,790 M680,690 700,700",
  ],
  grey: [
    "M75,290 90,275 160,308 158,325 120,315 75,298Z M165,345 190,345 185,375 168,355Z M170,308 190,310 188,318 172,316Z",
    "M195,378 215,340 230,322 245,320 257,298 268,325 258,345 275,355 278,370 293,380 265,390 250,405 255,425 240,440 220,442 215,400Z M248,430 265,460 272,500 266,498 258,450Z",
    "M708,635 750,650 762,668 780,672 775,685 815,715 805,720 782,712 765,690 745,685 735,700 710,703Z M788,668 815,665 830,655 812,633 836,655 815,672Z M852,660 862,672Z M868,678 880,685Z M895,688 908,695Z M903,703 930,718Z M908,730 915,731Z M977,758 985,768 980,772Z M985,778 992,782Z M952,822 982,845Z M1088,800 1095,790 1110,798Z M1105,787 1120,778 1120,786Z M540,705 565,695Z M770,629 775,630Z M802,633 810,636Z",
  ],
};

const LINE = "[vector-effect:non-scaling-stroke] stroke-2";
const BLUE = `${LINE} fill-[#a9def2] stroke-[#96c9db]`;
const GREY = `${LINE} fill-[#f4f4f4] stroke-[#dddddd]`;
const WATER = `${LINE} fill-white stroke-[#96c9db]`;
const BLUE_BORDER = `${LINE} fill-none stroke-[#96c9db]`;
const GREY_BORDER = `${LINE} fill-none stroke-[#dddddd]`;

function Paths({ list, className }: { list: string[]; className: string }) {
  return (
    <>
      {list.map((d, i) => (
        <path key={i} d={d} className={className} />
      ))}
    </>
  );
}

function WorldMap() {
  return (
    <svg viewBox="498 368 1300 834" className="mx-auto block w-[1300px] max-w-full" role="img" aria-label="국가별 사용자">
      <g transform="translate(500 360) scale(0.3954 0.3333)">
        <Paths list={AMERICA_LAND} className={BLUE} />
        <Paths list={AMERICA_WATER} className={WATER} />
        <Paths list={AMERICA_BORDERS} className={BLUE_BORDER} />
        <Paths list={AMERICA_GREY} className={GREY} />
        <Paths list={AMERICA_GREY_DETAIL} className={GREY_BORDER} />
      </g>
      <g transform="translate(1060 400) scale(0.3333)">
        <path d={EURASIA} className={BLUE} />
        <Paths list={NORTHWEST.land} className={BLUE} />
        <Paths list={NORTHWEST.water} className={WATER} />
        <Paths list={NORTHWEST.borders} className={BLUE_BORDER} />
        <Paths list={NORTHWEST.grey} className={GREY} />
        <path d={CASPIAN} className={WATER} />
        <g transform="translate(0 1020)">
          <Paths list={SOUTHWEST.grey} className={GREY} />
          <Paths list={SOUTHWEST.greyBorders} className={GREY_BORDER} />
          <Paths list={SOUTHWEST.land} className={BLUE} />
          <Paths list={SOUTHWEST.borders} className={BLUE_BORDER} />
          <path d="M535,930 553,917 558,933 545,942Z" className={GREY} />
        </g>
        <g transform="translate(1020 0)">
          <Paths list={NORTHEAST.land} className={BLUE} />
          <Paths list={NORTHEAST.borders} className={BLUE_BORDER} />
          <path
            d="M560,1197 578,1190 592,1225 587,1240 557,1250 562,1228 552,1215 560,1210Z M553,1260H562Z"
            className={`${LINE} fill-[#058dc7] stroke-[#057db0]`}
          />
        </g>
        <g transform="translate(1020 1020)">
          <Paths list={SOUTHEAST.land} className={BLUE} />
          <Paths list={SOUTHEAST.borders} className={BLUE_BORDER} />
          <Paths list={SOUTHEAST.grey} className={GREY} />
        </g>
      </g>
    </svg>
  );
}

// ── Flags ───────────────────────────────────────────────────────────────────

function UnionJack() {
  return (
    <>
      <path d="M0 0H32V22H0Z" fill="#3b58a6" />
      <path d="M0 0 32 22M32 0 0 22" stroke="#f3e9ee" strokeWidth="5" />
      <path d="M0 0 32 22M32 0 0 22" stroke="#e0585f" strokeWidth="2" />
      <path d="M16 0V22M0 11H32" stroke="#f6eef2" strokeWidth="8" />
      <path d="M16 0V22M0 11H32" stroke="#e03a42" strokeWidth="4" />
    </>
  );
}

function Flag({ code }: { code: string }) {
  return (
    <svg viewBox="0 0 32 22" className="h-[22px] w-8 shrink-0" aria-hidden="true">
      {code === "kr" && (
        <>
          <path d="M0 0H32V22H0Z" fill="#f3f3f3" />
          <path d="M11 11a5 5 0 0 1 10 0Z" fill="#e8323a" />
          <path d="M11 11a5 5 0 0 0 10 0Z" fill="#3f66d0" />
          <path d="M5 7 9 4M23 4 27 7M5 15 9 18M23 18 27 15" stroke="#777" strokeWidth="4" />
        </>
      )}
      {code === "us" && (
        <>
          <path d="M0 0H32V22H0Z" fill="#fff" />
          <path d="M0 1.5H32M0 6H32M0 10.500H32M0 15H32M0 20.500H32" stroke="#e96a64" strokeWidth="2.400" />
          <path d="M0 0H17V14H0Z" fill="#4a7de0" />
          <path d="M3 4H16M3 8H16M3 11H16" stroke="#dbe7ff" strokeWidth="1.500" strokeDasharray="1.500 2.500" />
        </>
      )}
      {code === "jp" && (
        <>
          <path d="M0 0H32V22H0Z" fill="#f4f4f4" />
          <circle cx="16" cy="11" r="6.500" fill="#f52f2f" />
        </>
      )}
      {code === "gb" && <UnionJack />}
      {code === "ca" && (
        <>
          <path d="M0 0H32V22H0Z" fill="#f7f3f3" />
          <path d="M0 0H8V22H0ZM24 0H32V22H24Z" fill="#dd3030" />
          <path d="M16 4 18 7 20 6 19.500 9 22 9 20 13 17 14V17H15V14L12 13 10 9 12.500 9 12 6 14 7Z" fill="#e0444a" />
        </>
      )}
      {code === "de" && (
        <>
          <path d="M0 0H32V8H0Z" fill="#4d4b45" />
          <path d="M0 7H32V15H0Z" fill="#e33228" />
          <path d="M0 15H32V22H0Z" fill="#f2c21c" />
        </>
      )}
      {(code === "au" || code === "nz") && (
        <>
          <path d="M0 0H32V22H0Z" fill="#1f2f73" />
          <g transform="scale(0.500)">
            <UnionJack />
          </g>
          {code === "au" ? (
            <path d="M8 15v5M5.500 17.500h5M25 3v3M25 17v3M20 9h3M27 9h3" stroke="#dfe6f7" strokeWidth="2.500" />
          ) : (
            <path d="M25 3v3M25 16v3M20 9h3M27 9h3" stroke="#c7607c" strokeWidth="2.500" />
          )}
        </>
      )}
      {code === "vn" && (
        <>
          <path d="M0 0H32V22H0Z" fill="#f2231b" />
          <path d="M16 4.500 17.700 9 22.500 9.200 18.700 12.200 20 17 16 14.200 12 17 13.300 12.200 9.500 9.200 14.300 9Z" fill="#ffee3d" />
        </>
      )}
      {code === "sg" && (
        <>
          <path d="M0 0H32V22H0Z" fill="#f6f2f2" />
          <path d="M0 0H32V11H0Z" fill="#ee2e36" />
          <path d="M7 3a3.500 3.500 0 1 0 0 6 4 4 0 0 1 0-6Z" fill="#fff" />
          <path d="M10 4h3M9 8h4" stroke="#f9c8ca" strokeWidth="1.500" />
        </>
      )}
      <path d="M1 1H31V21H1Z" fill="none" stroke="#000" strokeOpacity="0.150" strokeWidth="2" />
    </svg>
  );
}

// ── Small parts ─────────────────────────────────────────────────────────────

function Help() {
  return (
    <button
      type="button"
      aria-label="도움말"
      className="flex size-7 shrink-0 items-center justify-center rounded-full border border-[#dddddd] bg-white text-xl leading-none font-bold text-[#bfbfbf] shadow-[0_0_2px_#cccccc]"
    >
      ?
    </button>
  );
}

function Caret() {
  return (
    <svg viewBox="0 0 16 9" className="h-[9px] w-4" aria-hidden="true">
      <path d="M0 0H16L8 9Z" fill="#666" />
    </svg>
  );
}

function ValuePair({ value, share }: { value: string; share: string }) {
  return (
    <div className="flex items-baseline justify-end">
      <span>{value}</span>
      <span className="w-[100px] text-right text-[22px] text-[#8f8f8f]">({share})</span>
    </div>
  );
}

const VIEWS = [
  {
    id: "table",
    label: "데이터",
    icon: (
      <>
        <path d="M4 3H28V27H4Z" fill="#fff" />
        <path d="M4 3H28V27H4ZM4 11H28M4 19H28M12 3V27M20 3V27" fill="none" stroke="#777" strokeWidth="2" />
      </>
    ),
  },
  {
    id: "pie",
    label: "비율",
    icon: (
      <>
        <circle cx="16" cy="15" r="14" fill="#999" />
        <path d="M16 15V1A14 14 0 0 1 30 15Z" fill="#868686" />
        <path d="M16 15V29A14 14 0 0 0 30 15Z" fill="#b5b5b5" />
        <path d="M16 3V27M16 14.500H28" fill="none" stroke="#e4e4e4" strokeWidth="2" />
      </>
    ),
  },
  { id: "bars", label: "실적", icon: <path d="M3 5H28M3 15H17M3 25H21" fill="none" stroke="#666" strokeWidth="6" /> },
  {
    id: "compare",
    label: "비교",
    icon: (
      <>
        <path d="M3 6H16M16 12H25M9 18H16M16 24H29" fill="none" stroke="#666" strokeWidth="4" />
        <path d="M16 2V27" fill="none" stroke="#777" strokeWidth="2" />
      </>
    ),
  },
  {
    id: "pivot",
    label: "피봇",
    icon: (
      <>
        <path d="M1 6H31" fill="none" stroke="#666" strokeWidth="4" strokeDasharray="6 2" />
        <path d="M4 10V26" fill="none" stroke="#666" strokeWidth="6" strokeDasharray="4 2" />
        <path d="M12 10V26M20 10V26M28 10V26" fill="none" stroke="#b5b5b5" strokeWidth="2" />
      </>
    ),
  },
];

const CELL = "border-l-2 border-l-[#cccccc] pr-4 pb-1.5 text-right";

export default function App() {
  const [query, setQuery] = useState("");
  const [view, setView]   = useState("table");

  return (
    <div className="flex bg-white font-[Roboto,'Noto_Sans_CJK_KR',sans-serif] text-black">
      <main className="min-w-0 flex-1 pb-3">
        {/* Segments and date range */}
        <header className="flex items-start pt-[10px] pl-[13px]">
          <button type="button" className="flex h-[124px] w-[690px] items-center rounded-md border-2 border-[#e5e5e5] pl-[49px] text-left">
            <span className="size-[66px] rounded-full border-[9px] border-[#058dc7]" />
            <span className="flex flex-col pl-[17px]">
              <span className="text-[26px] leading-8">모든 사용자</span>
              <span className="text-[22px] leading-[30px] text-[#666666]">100.00% 사용자</span>
            </span>
          </button>
          <button type="button" className="ml-5 flex h-[124px] w-[690px] items-center rounded-md border-2 border-dashed border-[#e5e5e5] pl-[31px] text-left">
            <span className="size-[66px] rounded-full border-[9px] border-[#e5e5e5]" />
            <span className="pb-2.5 pl-4 text-[27px] leading-8 text-[#808080]">+ 세그먼트</span>
          </button>
          <button type="button" className="mr-[30px] ml-auto flex h-[54px] items-center gap-[14px] border-b-4 border-[#eeeeee] pr-1.5 pl-[5px] text-[32px] text-[#1e3347]">
            2021. 1. 1. - 2021. 12. 30.
            <svg viewBox="0 0 22 12" className="h-3 w-[22px]" aria-hidden="true">
              <path d="M0 0H22L11 12Z" fill="#b3b3b3" />
            </svg>
          </button>
        </header>

        {/* Explorer tabs */}
        <nav className="mt-5 flex h-[60px] items-end border-b-2 border-[#cccccc] pl-[13px] text-[24px] font-bold">
          <a href="#distribution" className="-mb-0.5 flex h-[60px] items-center rounded-t-sm border-2 border-b-0 border-[#cccccc] bg-linear-to-b from-[#f2f2f2] to-white px-[17px] pb-0.5 text-[#222222]">
            방문자 분포
          </a>
          <a href="#explorer" className="flex h-[58px] items-center pl-4 text-[#005c9c]">탐색</a>
        </nav>
        <nav className="flex h-[72px] items-center gap-[30px] border-b-2 border-[#cccccc] pb-1 pl-[28px] text-[25px] text-[#005c9c]">
          <a href="#summary" className="text-[#222222]">요약</a>
          <a href="#usage">사이트 활용 정보</a>
          <a href="#ecommerce">전자상거래</a>
        </nav>

        {/* Map */}
        <div className="pt-5 pl-[13px]">
          <button type="button" className="flex h-[62px] items-center gap-[19px] rounded-sm border-2 border-[#cccccc] bg-linear-to-b from-white to-[#f2f2f2] pr-[17px] pl-[18px] text-[21px] text-[#444444]">
            사용자 <Caret />
          </button>
        </div>
        <WorldMap />

        {/* Primary dimension */}
        <div className="flex h-16 items-center border-t-2 border-[#ececec] pl-[13px] text-[21px]">
          <span className="pt-0.5">기본 측정기준:</span>
          <span className="relative ml-[15px] flex h-full items-center pt-0.5 font-medium text-[#222222]">
            국가
            <svg viewBox="0 0 24 14" className="absolute -bottom-0.5 left-1/2 h-[14px] w-6 -translate-x-1/2" aria-hidden="true">
              <path d="M0 14 12 1 24 14Z" fill="#f5f5f5" />
              <path d="M0 13 12 1 24 13" fill="none" stroke="#e0e0e0" strokeWidth="2" />
            </svg>
          </span>
          <div className="ml-[31px] flex gap-[31px] pt-0.5 text-[#1155cc]">
            <a href="#city">도시</a>
            <a href="#continent">대륙</a>
            <a href="#subcontinent">하위대륙</a>
          </div>
        </div>

        {/* Table toolbar */}
        <div className="flex h-[76px] items-center border-t-2 border-b-2 border-[#e2e2e2] bg-[#f5f5f5] pr-[52px] pl-[33px]">
          <button type="button" className="flex h-14 items-center gap-[18px] rounded-sm border-2 border-[#cccccc] bg-linear-to-b from-white to-[#f2f2f2] px-[14px] pb-0.5 text-[21px] text-[#444444]">
            보조 측정기준 <Caret />
          </button>
          <form className="ml-auto flex h-[46px]" onSubmit={(e) => e.preventDefault()}>
            <input
              type="text"
              aria-label="검색"
              value={query}
              onChange={(e) => setQuery(e.target.value)}
              className="w-[263px] border-2 border-r-0 border-[#999999] bg-white px-2 text-[22px]"
            />
            <button type="submit" aria-label="검색" className="flex w-[57px] items-center justify-center rounded-r-sm border-2 border-[#aaaaaa] border-l-[#cccccc] bg-[#f5f5f5]">
              <svg viewBox="0 0 28 28" className="size-7" aria-hidden="true">
                <circle cx="10.500" cy="10" r="7.500" fill="none" stroke="#555" strokeWidth="4" />
                <path d="M16 16 26 25" stroke="#555" strokeWidth="6" />
              </svg>
            </button>
          </form>
          <a href="#advanced" className="ml-[18px] text-[22px] text-[#005c9c]">고급</a>
          <div className="ml-7 flex h-[50px] overflow-hidden rounded-sm border-2 border-[#bbbbbb]">
            {VIEWS.map((v) => (
              <button
                key={v.id}
                type="button"
                aria-label={v.label}
                aria-pressed={view === v.id}
                onClick={() => setView(v.id)}
                className={`flex w-14 items-center justify-center border-l-2 border-[#c4c4c4] first:w-[54px] first:border-l-0 ${
                  view === v.id ? "bg-[#f5f5f5] shadow-[inset_0_0_8px_#999999]" : "bg-[#f5f5f5]"
                }`}
              >
                <svg viewBox="0 0 32 30" className="h-[30px] w-8" aria-hidden="true">
                  {v.icon}
                </svg>
              </button>
            ))}
          </div>
        </div>

        {/* Data table */}
        <table className="w-full table-fixed border-separate border-spacing-0 border-t-2 border-r-2 border-[#cccccc] text-[26px]">
          <colgroup>
            <col />
            <col className="w-[230px]" />
            <col className="w-[228px]" />
            <col className="w-[244px]" />
            <col className="w-[178px]" />
            <col className="w-[130px]" />
            <col className="w-[202px]" />
            <col className="w-[158px]" />
            <col className="w-[162px]" />
            <col className="w-[246px]" />
          </colgroup>
          <thead className="bg-[#e8e8e8] text-[21px] leading-[26px]">
            <tr className="h-[74px]">
              <th rowSpan={2} scope="col" className="border-b-2 border-[#e0e0e0] pb-0.5 pl-[47px]">
                <div className="flex items-center gap-3">국가 <Help /></div>
              </th>
              <th colSpan={3} scope="colgroup" className="border-b-2 border-l-2 border-[#cccccc] pb-1 pl-3 text-left">획득</th>
              <th colSpan={3} scope="colgroup" className="border-b-2 border-l-2 border-[#cccccc] pb-1 pl-3 text-left">동작</th>
              <th colSpan={3} scope="colgroup" className="border-b-2 border-l-2 border-[#cccccc] pb-1 pl-3 text-left">전환</th>
            </tr>
            <tr className="h-[122px]">
              {METRICS.map((m) => (
                <th key={m.lines[0]} scope="col" className="border-b-2 border-l-2 border-b-[#e0e0e0] border-l-[#cccccc] p-0">
                  {m.stacked ? (
                    <div className="flex flex-col items-center pr-2 pb-1.5">
                      {m.lines.map((line) => (
                        <span key={line} className="whitespace-nowrap">{line}</span>
                      ))}
                      <span className="pt-2.5"><Help /></span>
                    </div>
                  ) : (
                    <div className="flex items-center pt-2">
                      <div className={`flex flex-1 items-center justify-center gap-3 ${m.sorted ? "pr-2" : "pr-5"}`}>
                        {m.lines[0]} <Help />
                      </div>
                      {m.sorted && (
                        <svg viewBox="0 0 22 24" className="mr-1.5 -ml-1 h-6 w-[22px]" aria-label="내림차순">
                          <path d="M11 0V20M2 11 11 20 20 11" fill="none" stroke="#666" strokeWidth="4" />
                        </svg>
                      )}
                    </div>
                  )}
                </th>
              ))}
            </tr>
          </thead>
          <tbody>
            <tr className="h-[164px] bg-[#f8f8f8] align-top">
              <td className="border-b-2 border-[#e5e5e5]" />
              {SUMMARY.map((s, i) => (
                <td
                  key={METRICS[i].lines[0]}
                  className={`border-b-2 border-l-2 border-b-[#e5e5e5] border-l-[#cccccc] pt-5 pr-5 text-right whitespace-nowrap ${i === 0 ? "bg-white" : ""}`}
                >
                  <div className="text-[40px] leading-[44px] text-[#333333]">{s.value}</div>
                  <div className="text-[21px] leading-[26px] text-[#8f8f8f]">{s.label}</div>
                  {s.lines.map((line) => (
                    <div key={line} className="text-[22px] leading-[25px] text-[#8f8f8f]">{line}</div>
                  ))}
                </td>
              ))}
            </tr>
            {ROWS.map((r, i) => (
              <tr key={r.name} className="h-[70px] [&>td]:border-b-2 [&>td]:border-b-[#e5e5e5]">
                <td className="pb-1.5">
                  <div className="flex items-center">
                    <span className="w-12 text-right">{i + 1}.</span>
                    <span className="pt-1 pr-[17px] pl-[31px]"><Flag code={r.flag} /></span>
                    <a href={`#${r.flag}`} className="text-[#005c9c]">{r.name}</a>
                  </div>
                </td>
                <td className={`${CELL} bg-[#fafafa] font-bold`}><ValuePair value={r.users[0]} share={r.users[1]} /></td>
                <td className={CELL}><ValuePair value={r.newUsers[0]} share={r.newUsers[1]} /></td>
                <td className={CELL}><ValuePair value={r.sessions[0]} share={r.sessions[1]} /></td>
                <td className={CELL}>{r.bounce}</td>
                <td className={CELL}>{r.pages}</td>
                <td className={CELL}>{r.duration}</td>
                <td className={CELL}>0.00%</td>
                <td className={CELL}><ValuePair value="0" share="0.00%" /></td>
                <td className={CELL}><ValuePair value="US$0.00" share="0.00%" /></td>
              </tr>
            ))}
          </tbody>
        </table>
      </main>
      <div className="w-[7px] shrink-0 border-l-2 border-[#e8eaed] bg-[#f8f9fa]" />
    </div>
  );
}
